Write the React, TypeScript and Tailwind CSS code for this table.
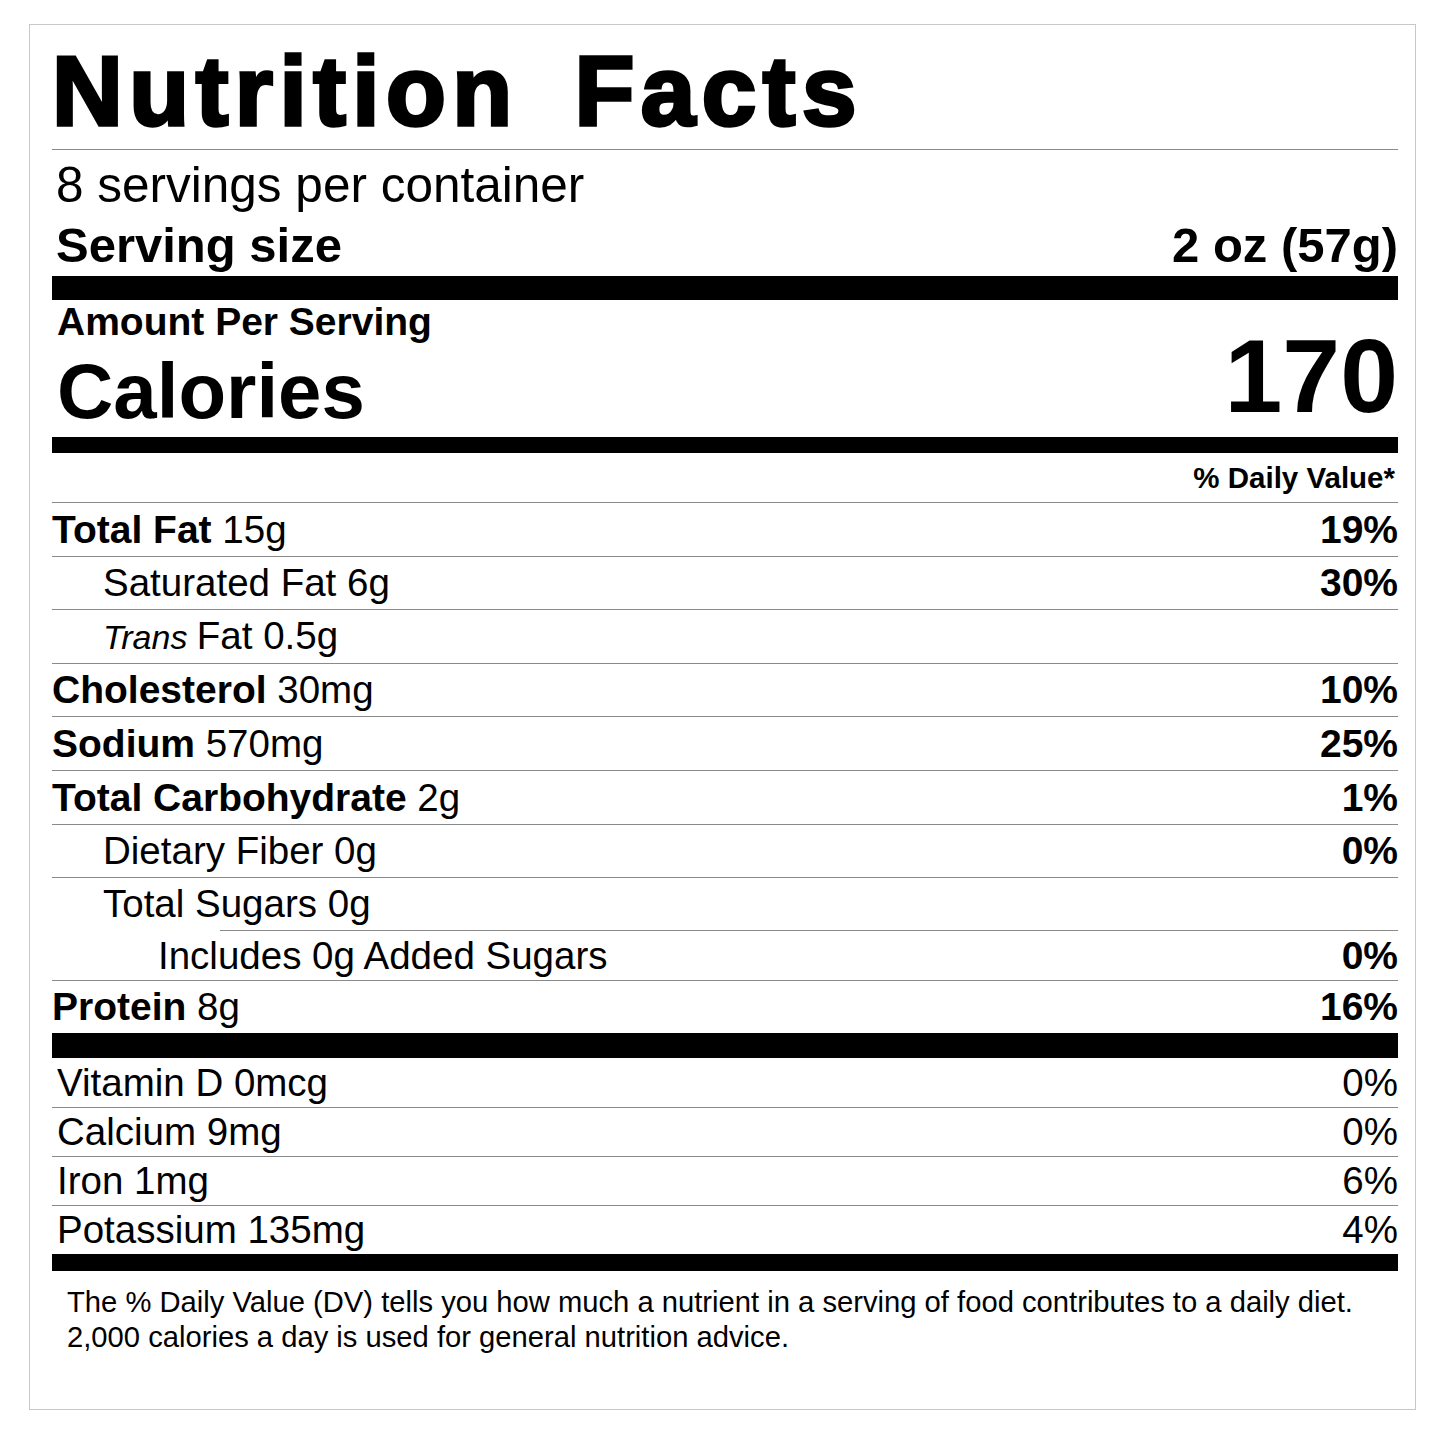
import React from 'react';

type Nutrient = {
  label: string;
  amount: string;
  dv?: string;
  bold?: boolean;
  indent?: 0 | 1 | 2;
  italicPrefix?: string;
  h: string;
  topLine?: 'full' | 'partial';
};

const nutrients: Nutrient[] = [
  { label: 'Total Fat', amount: '15g', dv: '19%', bold: true, h: 'h-[53px]', topLine: 'full' },
  { label: 'Saturated Fat', amount: '6g', dv: '30%', indent: 1, h: 'h-[52px]', topLine: 'full' },
  { label: 'Fat', italicPrefix: 'Trans', amount: '0.5g', indent: 1, h: 'h-[53px]', topLine: 'full' },
  { label: 'Cholesterol', amount: '30mg', dv: '10%', bold: true, h: 'h-[52px]', topLine: 'full' },
  { label: 'Sodium', amount: '570mg', dv: '25%', bold: true, h: 'h-[53px]', topLine: 'full' },
  { label: 'Total Carbohydrate', amount: '2g', dv: '1%', bold: true, h: 'h-[53px]', topLine: 'full' },
  { label: 'Dietary Fiber', amount: '0g', dv: '0%', indent: 1, h: 'h-[52px]', topLine: 'full' },
  { label: 'Total Sugars', amount: '0g', indent: 1, h: 'h-[52px]', topLine: 'full' },
  { label: 'Includes 0g Added Sugars', amount: '', dv: '0%', indent: 2, h: 'h-[49px]', topLine: 'partial' },
  { label: 'Protein', amount: '8g', dv: '16%', bold: true, h: 'h-[52px]', topLine: 'full' },
];

const vitamins = [
  { label: 'Vitamin D 0mcg', dv: '0%' },
  { label: 'Calcium 9mg', dv: '0%' },
  { label: 'Iron 1mg', dv: '6%' },
  { label: 'Potassium 135mg', dv: '4%' },
];

function NutrientRow({ n }: { n: Nutrient }) {
  const indent = n.indent === 2 ? 'pl-[106px]' : n.indent === 1 ? 'pl-[51px]' : 'pl-0';
  return (
    <div>
      {n.topLine === 'partial' ? (
        <div className="ml-[168px] h-px bg-[#8a8a8a]" />
      ) : (
        <div className="h-px bg-[#8a8a8a]" />
      )}
      <div className={`flex items-center justify-between ${n.h}`}>
        <span className={`${indent} whitespace-nowrap text-[38.5px] leading-[40px]`}>
          {n.italicPrefix && <span className="italic text-[34px]">{n.italicPrefix} </span>}
          <span className={n.bold ? 'font-bold text-[39px]' : ''}>{n.label}</span>
          {n.amount && <span> {n.amount}</span>}
        </span>
        {n.dv && <span className="text-[39px] font-bold leading-[40px]">{n.dv}</span>}
      </div>
    </div>
  );
}

export default function App() {
  return (
    <div className="min-h-[1445px] w-[1445px] bg-white pl-[29px] pt-[24px] font-['Liberation_Sans',Arial,Helvetica,sans-serif] text-black">
      <div className="h-[1386px] w-[1387px] border border-[#c8c8c8] pl-[22px] pr-[17px]">
        {/* title */}
        <div className="pt-[17px] pb-[9px] border-b border-[#8a8a8a]">
          <h1 className="whitespace-nowrap text-[98px] font-bold leading-[98px] tracking-[6.5px] [word-spacing:22px] [-webkit-text-stroke:3.5px_black]">
            Nutrition Facts
          </h1>
        </div>

        {/* servings */}
        <div className="pl-[4px] pt-[5px]">
          <div className="h-[60px] text-[49.5px] leading-[60px]">8 servings per container</div>
          <div className="flex h-[60px] items-start justify-between text-[49px] font-bold leading-[60px]">
            <span>Serving size</span>
            <span>2 oz (57g)</span>
          </div>
        </div>
        <div className="mt-px h-[24px] bg-black" />

        {/* calories */}
        <div className="flex h-[137px] justify-between pl-[5px]">
          <div className="flex flex-col pt-[2px]">
            <div className="h-[40px] text-[39px] font-bold leading-[40px]">Amount Per Serving</div>
            <div className="mt-[10px] text-[78px] font-bold leading-[78px]">Calories</div>
          </div>
          <div className="mt-[24px] text-[104px] font-bold leading-[104px]">170</div>
        </div>
        <div className="h-[16px] bg-black" />

        {/* daily value header */}
        <div className="h-[49px] pr-[3px] pt-[10px] text-right text-[29.5px] font-bold leading-[29px]">
          % Daily Value*
        </div>

        {nutrients.map((n) => (
          <NutrientRow key={n.label} n={n} />
        ))}

        <div className="h-[25px] bg-black" />

        {/* vitamins */}
        {vitamins.map((v, i) => (
          <div key={v.label}>
            {i > 0 && <div className="h-px bg-[#8a8a8a]" />}
            <div className={`flex items-center justify-between pl-[5px] ${i > 0 ? 'h-[48px]' : 'h-[49px]'}`}>
              <span className="text-[38.5px] leading-[40px]">{v.label}</span>
              <span className="text-[38.5px] leading-[40px]">{v.dv}</span>
            </div>
          </div>
        ))}
        <div className="h-[17px] bg-black" />

        {/* footnote */}
        <p className="pl-[15px] pt-[14px] text-[29.2px] leading-[35px]">
          The % Daily Value (DV) tells you how much a nutrient in a serving of food contributes to a daily diet.
          <br />
          2,000 calories a day is used for general nutrition advice.
        </p>
      </div>
    </div>
  );
}
